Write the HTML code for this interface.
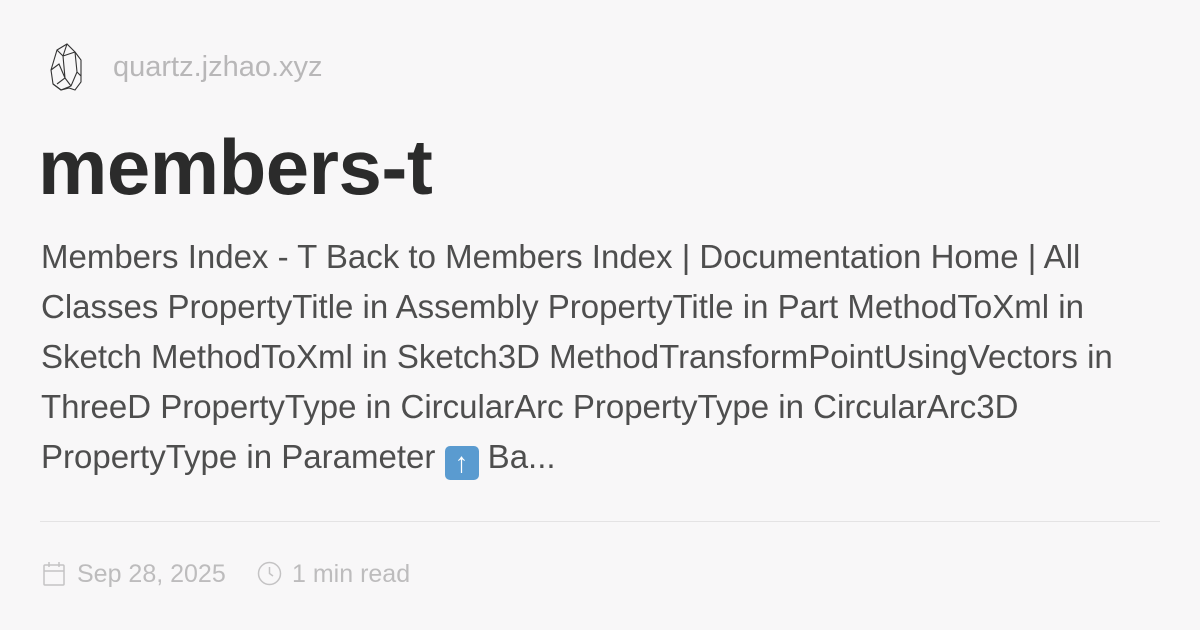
<!DOCTYPE html>
<html><head><meta charset="utf-8"><style>
*{margin:0;padding:0;box-sizing:border-box}
body{width:1200px;height:630px;background:#f8f7f8;font-family:"Liberation Sans",sans-serif;position:relative;overflow:hidden}
.site{position:absolute;left:113px;top:51px;font-size:29px;color:#b8b7b8}
.logo{position:absolute;left:47px;top:42px}
h1{position:absolute;left:38px;top:122px;font-size:78px;font-weight:bold;color:#2b2b2b;letter-spacing:-0.5px}
.desc{position:absolute;left:41px;top:232px;font-size:33px;line-height:50px;color:#4e4e4e;white-space:nowrap}
.desc div{height:50px}
.emo{display:inline-block;width:34px;height:34px;background:#5a9bd0;border-radius:5px;vertical-align:-4px;position:relative;color:#fff;text-align:center;font-size:28px;line-height:34px;font-weight:bold}
.hr{position:absolute;left:40px;right:40px;top:521px;height:1px;background:#e4e3e4}
.meta{position:absolute;top:560px;font-size:25px;color:#bdbcbd}
</style></head><body>
<svg class="logo" width="40" height="52" viewBox="0 0 40 52" fill="none" stroke="#333" stroke-width="1.1">
<path d="M10 8 L20 2 L28 10 L30 30 L24 44 L14 48 L6 42 L4 28 Z"/>
<path d="M10 8 L16 14 L28 10 M16 14 L18 36 M20 2 L16 14 M28 10 L34 18 L34 34 L30 30 M4 28 L12 22 L18 36 L10 42 M6 42 L14 48 L22 46 L28 48 L34 40 L34 34 M18 36 L24 44"/>
</svg>
<div class="site">quartz.jzhao.xyz</div>
<h1>members-t</h1>
<div class="desc">
<div>Members Index - T Back to Members Index | Documentation Home | All</div>
<div>Classes PropertyTitle in Assembly PropertyTitle in Part MethodToXml in</div>
<div>Sketch MethodToXml in Sketch3D MethodTransformPointUsingVectors in</div>
<div>ThreeD PropertyType in CircularArc PropertyType in CircularArc3D</div>
<div>PropertyType in Parameter <span class="emo">↑</span> Ba...</div>
</div>
<div class="hr"></div>
<svg style="position:absolute;left:43px;top:562px" width="22" height="24" viewBox="0 0 22 24" fill="none" stroke="#c4c3c4" stroke-width="1.5"><rect x="1" y="3" width="20" height="20" rx="1"/><path d="M1 9 H21 M6 0 V5 M16 0 V5"/></svg>
<div class="meta" style="left:77px">Sep 28, 2025</div>
<svg style="position:absolute;left:257px;top:561px" width="25" height="25" viewBox="0 0 25 25" fill="none" stroke="#c4c3c4" stroke-width="1.5"><circle cx="12.5" cy="12.5" r="11"/><path d="M12.5 6 V12.5 L16 15"/></svg>
<div class="meta" style="left:292px">1 min read</div>
</body></html>
